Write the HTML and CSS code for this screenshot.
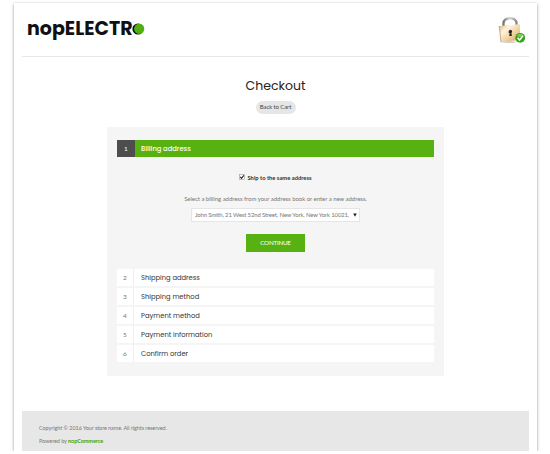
FILE: index.html
```
<!DOCTYPE html>
<html lang="en">
<head>
<meta charset="utf-8">
<title>Checkout</title>
<link rel="stylesheet" href="styles.css">
</head>
<body>
<div class="page">
  <header class="header">
    <div class="logo"><span class="logo-text">nopELECTR</span><svg class="logo-dot" width="13" height="12" viewBox="0 0 13 12"><circle cx="6" cy="6" r="5.6" fill="#111"/><circle cx="7.2" cy="5.8" r="5.1" fill="#4fb010"/></svg></div>
    <svg class="lock" width="28" height="28" viewBox="0 0 28 28">
      <defs>
        <linearGradient id="body" x1="0" y1="0" x2="1" y2="1"><stop offset="0" stop-color="#d9b483"/><stop offset=".3" stop-color="#fff3dc"/><stop offset=".6" stop-color="#f1d3a0"/><stop offset="1" stop-color="#c99b5e"/></linearGradient>
        <linearGradient id="steel"><stop offset="0" stop-color="#777"/><stop offset=".5" stop-color="#d8d8d8"/><stop offset="1" stop-color="#888"/></linearGradient>
      </defs>
      <path d="M1 26Q10 24 20 26Q12 28 1 26Z" fill="#ccc"/>
      <path d="M5.5 10V7.5C5.5 .5 18.5 .5 18.5 7.5V10" fill="none" stroke="url(#steel)" stroke-width="2.4"/>
      <path d="M1.2 10L22 8.3V24L3 26Z" fill="url(#body)"/>
      <path d="M1.2 10L3 26" stroke="#ad8a61" stroke-width=".7"/>
      <path d="M11.4 14.2A1.7 1.7 0 1 1 13.4 17L13.9 20H11.2L11.7 17H10.7V15Z" fill="#2b2118"/>
      <circle cx="22.2" cy="21.8" r="4.9" fill="#32a51c"/>
      <path d="M18.6 20A4 4 0 0 1 25.8 20Q22 22 18.6 20Z" fill="#72c957"/>
      <path d="M19.6 21.8L21.6 24L25 19.8" fill="none" stroke="#fff" stroke-width="1.5"/>
    </svg>
  </header>
  <main class="main">
    <h1 class="title"><span>Checkout</span></h1>
    <a class="back"><span>Back to Cart</span></a>
    <section class="panel">
      <div class="step active"><span class="num">1</span><h2 class="name">Billing address</h2></div>
      <div class="form">
        <label class="same"><svg width="6" height="6" viewBox="0 0 6 6"><rect x=".4" y=".4" width="5" height="5" fill="#fff" stroke="#999" stroke-width=".6"/><path d="M1.2 2.9L2.5 4.3L4.8 1.3" fill="none" stroke="#222" stroke-width="1.1"/></svg><span>Ship to the same address</span></label>
        <p class="hint">Select a billing address from your address book or enter a new address.</p>
        <div class="select"><span>John Smith, 21 West 52nd Street, New York, New York 10021,</span><svg class="arrow" width="4" height="4" viewBox="0 0 4 4"><path d="M.2 .5H3.8L2 3.7Z" fill="#222"/></svg></div>
        <button class="continue">CONTINUE</button>
      </div>
      <div class="steps">
        <div class="step"><span class="num">2</span><h2 class="name">Shipping address</h2></div>
        <div class="step"><span class="num">3</span><h2 class="name">Shipping method</h2></div>
        <div class="step"><span class="num">4</span><h2 class="name">Payment method</h2></div>
        <div class="step"><span class="num">5</span><h2 class="name">Payment information</h2></div>
        <div class="step"><span class="num">6</span><h2 class="name">Confirm order</h2></div>
      </div>
    </section>
  </main>
  <footer class="footer">
    <p class="copy">Copyright © 2016 Your store name. All rights reserved.</p>
    <p class="powered">Powered by <a>nopCommerce</a></p>
  </footer>
</div>
</body>
</html>
```
FILE: styles.css
```
* { box-sizing: border-box; }
body { margin: 0; background: #fff; overflow: hidden; font-family: Lato, "Open Sans", sans-serif; font-size: 6px; color: #777; }
h1, h2, p { margin: 0; font-weight: 400; }
.page { width: 523px; height: 448px; margin: 3px 0 0 14px; padding: 0 8px; background: #fff; box-shadow: 0 1px 3px rgba(0,0,0,.42); display: flex; flex-direction: column; }
.header { height: 54px; border-bottom: 1px solid #e6e6e6; display: flex; justify-content: space-between; padding: 13px 3px 0 5px; }
.logo { display: flex; height: 25px; align-items: center; font: 700 19px/25px Poppins, Inter, sans-serif; color: #111; }
.logo-text { width: 105px; white-space: nowrap; letter-spacing: .02px; }
.logo-dot { margin-top: 1px; }
.main { flex: 1; display: flex; flex-direction: column; align-items: center; }
.title { margin-top: 19px; height: 20px; font: 400 12.5px/20px Poppins, Inter, sans-serif; color: #222; }
.back { margin-top: 5px; width: 40px; height: 13px; border-radius: 7px; background: #e6e6e6; color: #444; font-size: 6px; line-height: 12px; text-align: center; white-space: nowrap; letter-spacing: -.1px; }
.panel { width: 337px; height: 249px; margin-top: 13px; padding: 13px 10px 0; background: #f5f5f5; }
.step { display: flex; height: 17px; background: #fff; line-height: 17px; }
.num { width: 17px; text-align: center; border-right: 1px solid #f0f0f0; font-size: 6.5px; }
.name { padding-left: 7px; font: 400 6.75px/17px Poppins, Inter, sans-serif; color: #333; }
.active { background: #57b110; }
.active .num { background: #4d4d4d; color: #fff; border-right: 0; width: 18px; }
.active .name { color: #fff; padding-left: 6px; font-weight: 500; }
.form { height: 112px; display: flex; flex-direction: column; align-items: center; }
.same { margin-top: 16px; height: 8px; display: flex; gap: 2px; align-items: center; color: #333; font-weight: 700; font-size: 5.8px; }
.hint { margin-top: 13px; line-height: 9px; white-space: nowrap; letter-spacing: -.04px; }
.select { margin-top: 5px; width: 169px; height: 14px; background: #fff; border: 1px solid #e5e5e5; padding: 0 2px 1px 3px; display: flex; justify-content: space-between; align-items: center; white-space: nowrap; letter-spacing: -.16px; }
.arrow { flex: none; }
.continue { margin-top: 12px; width: 59px; height: 18px; padding: 0; border: 0; background: #57b110; color: #fff; font: 400 6.3px/18px Lato, sans-serif; letter-spacing: -.25px; }
.steps { display: flex; flex-direction: column; gap: 2px; }
.footer { height: 40px; background: #e7e7e7; padding: 12px 17px 0; font-size: 5.5px; line-height: 10px; letter-spacing: -.07px; }
.powered { margin-top: 3px; }
.powered a { color: #43a50a; font-weight: 700; }
```
